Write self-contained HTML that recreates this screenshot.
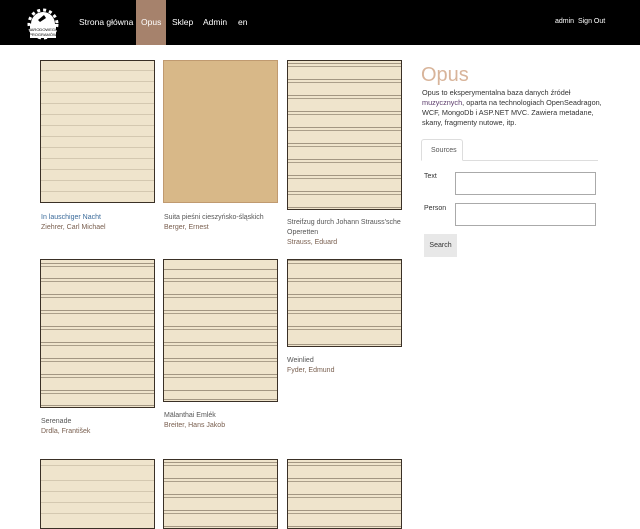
<!DOCTYPE html>
<html><head><meta charset="utf-8"><style>
*{margin:0;padding:0;box-sizing:border-box}
body{width:640px;height:515px;overflow:hidden;background:#fff;font-family:"Liberation Sans","DejaVu Sans",sans-serif;position:relative}
.nav{position:absolute;left:0;top:0;width:640px;height:45px;background:#000}
.nav a{position:absolute;top:17px;color:#fff;font-size:8.5px;text-decoration:none}
.act{position:absolute;left:136px;top:0;width:30px;height:45px;background:#a6826c}
.img{position:absolute;border:1px solid #3a3026;background:#efe4cc;
background-image:repeating-linear-gradient(180deg,transparent 0 8px,rgba(70,55,40,.45) 8px 9px,transparent 9px 11px,rgba(70,55,40,.4) 11px 12px,transparent 12px 16px);background-origin:content-box;padding:10px 6px}
.blank{background-image:repeating-linear-gradient(180deg,transparent 0 10px,rgba(90,70,50,.18) 10px 11px)}
.t{position:absolute;font-size:7px;color:#555;line-height:10px}
.t .a{color:#7a6050}
.t.b{color:#3a6a9a}
</style></head><body>
<div class="nav">
<svg style="position:absolute;left:26px;top:4px" width="34" height="36" viewBox="0 0 34 36"><path d="M5 20 A12 12 0 0 1 29 20 Z" fill="#fff"/><circle cx="17" cy="20" r="14" fill="none" stroke="#fff" stroke-width="3" stroke-dasharray="3 3"/><rect x="4" y="20" width="26" height="14" fill="#fff"/><path d="M12 16 l6 -5 2 3 -6 4z" fill="#000"/><text x="17" y="27" font-size="4" fill="#000" text-anchor="middle" font-family="Liberation Sans">NARODOWEGO</text><text x="17" y="32" font-size="4" fill="#000" text-anchor="middle" font-family="Liberation Sans">PROGRAMÓW</text></svg>
<div class="act"></div>
<a style="left:79px">Strona główna</a>
<a style="left:141px">Opus</a>
<a style="left:172px">Sklep</a>
<a style="left:203px">Admin</a>
<a style="left:238px">en</a>
<a style="left:555px;font-size:7px;top:18px">admin&nbsp; Sign Out</a>
</div>

<div class="img blank" style="left:40px;top:60px;width:115px;height:143px"></div>
<div class="img" style="left:163px;top:60px;width:115px;height:143px;background:#d8b888;background-image:none;border-color:#c09a70"></div>
<div class="img" style="left:287px;top:60px;width:115px;height:150px"></div>
<div class="t b" style="left:41px;top:213px">In lauschiger Nacht<br><span class="a">Ziehrer, Carl Michael</span></div>
<div class="t" style="left:164px;top:213px">Suita pieśni cieszyńsko-śląskich<br><span class="a">Berger, Ernest</span></div>
<div class="t" style="left:287px;top:218px">Streifzug durch Johann Strauss'sche<br>Operetten<br><span class="a">Strauss, Eduard</span></div>

<div class="img" style="left:40px;top:259px;width:115px;height:149px"></div>
<div class="img" style="left:163px;top:259px;width:115px;height:143px"></div>
<div class="img" style="left:287px;top:259px;width:115px;height:88px"></div>
<div class="t" style="left:41px;top:417px">Serenade<br><span class="a">Drdla, František</span></div>
<div class="t" style="left:164px;top:411px">Mälanthai Emlék<br><span class="a">Breiter, Hans Jakob</span></div>
<div class="t" style="left:287px;top:356px">Weinlied<br><span class="a">Fyder, Edmund</span></div>

<div class="img blank" style="left:40px;top:459px;width:115px;height:70px"></div>
<div class="img" style="left:163px;top:459px;width:115px;height:70px"></div>
<div class="img" style="left:287px;top:459px;width:115px;height:70px"></div>

<div style="position:absolute;left:421px;top:64px;font-size:20px;color:#d8b49a;font-weight:300">Opus</div>
<div style="position:absolute;left:422px;top:88px;width:182px;font-size:7.3px;line-height:10px;color:#333">Opus to eksperymentalna baza danych źródeł <span style="color:#5a3a6a">muzycznych</span>, oparta na technologiach OpenSeadragon, WCF, MongoDb i ASP.NET MVC. Zawiera metadane, skany, fragmenty nutowe, itp.</div>
<div style="position:absolute;left:421px;top:160px;width:177px;border-top:1px solid #ddd"></div>
<div style="position:absolute;left:421px;top:139px;width:42px;height:22px;border:1px solid #ddd;border-bottom:1px solid #fff;border-radius:3px 3px 0 0;background:#fff;font-size:7px;color:#555;padding:7px 0 0 9px">Sources</div>
<div style="position:absolute;left:424px;top:173px;font-size:7px;color:#333">Text</div>
<div style="position:absolute;left:455px;top:172px;width:141px;height:23px;border:1px solid #aaa"></div>
<div style="position:absolute;left:424px;top:205px;font-size:7px;color:#333">Person</div>
<div style="position:absolute;left:455px;top:203px;width:141px;height:23px;border:1px solid #aaa"></div>
<div style="position:absolute;left:424px;top:234px;width:33px;height:23px;background:#e8e8e8;font-size:7px;color:#333;text-align:center;line-height:23px">Search</div>
</body></html>
